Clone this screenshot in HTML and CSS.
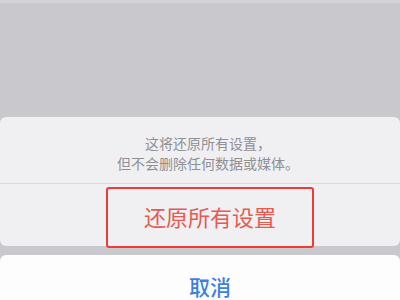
FILE: index.html
```html
<!DOCTYPE html>
<html lang="zh-CN">
<head>
    <meta charset="UTF-8">
    <meta name="viewport" content="width=device-width, initial-scale=1.0">
    <title>还原所有设置</title>
    <link rel="stylesheet" href="styles.css">
</head>
<body>
    <div class="screen">
        <div class="top-strip"></div>
        <div class="dimmed"></div>

        <!-- Action sheet -->
        <div class="sheet">
            <div class="message">
                <p>这将还原所有设置，</p>
                <p>但不会删除任何数据或媒体。</p>
            </div>
            <div class="action destructive">还原所有设置</div>
            <div class="highlight"></div>
        </div>

        <div class="cancel">取消</div>
    </div>
</body>
</html>
```

FILE: styles.css
```css
html, body {
    margin: 0;
    padding: 0;
}
body {
    font-family: "Noto Sans CJK SC", "Noto Sans", sans-serif;
    background: #c9c8cd;
    width: 400px;
    height: 300px;
    overflow: hidden;
}
.screen {
    display: flex;
    flex-direction: column;
    height: 300px;
}
.top-strip {
    height: 3px;
    background: #d4d4d8;
}
.dimmed {
    height: 114px;
    background: #c9c8cd;
}
.sheet {
    position: relative;
    background: #f0f0f2;
    border-radius: 6px;
    height: 129px;
    display: flex;
    flex-direction: column;
}
.message {
    height: 67px;
    box-sizing: border-box;
    padding: 16px 0 0 16px;
    border-bottom: 1px solid #dbdbde;
    text-align: center;
    color: #8f8f94;
    font-size: 14px;
    line-height: 20px;
}
.message p {
    margin: 0;
}
.action {
    flex: 1;
    display: flex;
    align-items: center;
    justify-content: center;
    font-size: 22px;
    padding: 1px 0 0 20px;
}
.destructive {
    color: #e65a52;
}
.highlight {
    position: absolute;
    left: 106px;
    top: 70px;
    width: 208px;
    height: 61px;
    box-sizing: border-box;
    border: 2px solid #ef3a35;
    border-radius: 3px;
}
.cancel {
    margin-top: 9px;
    flex: 1;
    background: #fdfdfd;
    border-radius: 6px 6px 0 0;
    text-align: center;
    color: #3d80df;
    font-size: 21px;
    line-height: 21px;
    padding: 21px 0 0 20px;
    font-weight: 500;
}
```
